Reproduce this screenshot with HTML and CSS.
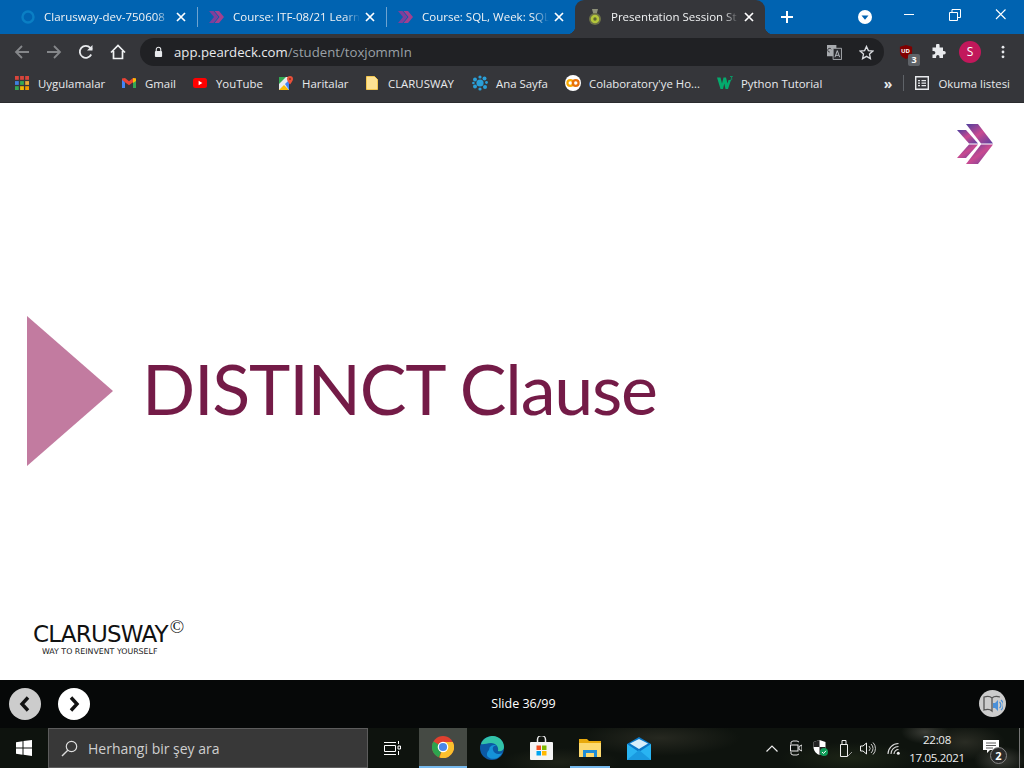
FILE: index.html
```html
<!DOCTYPE html>
<html>
  <head>
    <meta charset="utf-8">
    <title>Presentation Session Student</title>
    <link rel="stylesheet" href="styles.css">
  </head>
  <body>
    <!-- sekmeler -->
    <div class="tabstrip">
      <div class="tab">
        <svg class="fav" viewBox="0 0 16 16"><circle cx="8" cy="8" r="5.500" fill="none" stroke="#0a7fc4" stroke-width="2.400"/></svg>
        <span class="tab-title">Clarusway-dev-750608</span>
        <span class="tab-x"><svg width="10" height="10" viewBox="0 0 10 10"><path d="M1 1l8 8M9 1L1 9" stroke="#fff" stroke-width="1.700"/></svg></span>
      </div>
      <div class="tab sep">
        <svg class="fav" viewBox="0 0 16 16"><path d="M0 2h4.500l5 6-5 6H0l5-6z" fill="#7d3f9c"/><path d="M5.500 2H10l5 6-5 6H5.500l5-6z" fill="#a2408f"/></svg>
        <span class="tab-title">Course: ITF-08/21 Learn</span>
        <span class="tab-x"><svg width="10" height="10" viewBox="0 0 10 10"><path d="M1 1l8 8M9 1L1 9" stroke="#fff" stroke-width="1.700"/></svg></span>
      </div>
      <div class="tab sep">
        <svg class="fav" viewBox="0 0 16 16"><path d="M0 2h4.500l5 6-5 6H0l5-6z" fill="#7d3f9c"/><path d="M5.500 2H10l5 6-5 6H5.500l5-6z" fill="#a2408f"/></svg>
        <span class="tab-title">Course: SQL, Week: SQL</span>
        <span class="tab-x"><svg width="10" height="10" viewBox="0 0 10 10"><path d="M1 1l8 8M9 1L1 9" stroke="#fff" stroke-width="1.700"/></svg></span>
      </div>
      <div class="tab active">
        <svg class="fav" viewBox="0 0 16 16"><path d="M5 0h6l-1.200 4.500H6.200z" fill="#8d9078"/><circle cx="8" cy="10" r="6" fill="#6c7148"/><circle cx="8" cy="10" r="4.300" fill="#b4c63a"/><circle cx="8" cy="10" r="1.700" fill="#5d6630"/></svg>
        <span class="tab-title">Presentation Session St</span>
        <span class="tab-x"><svg width="10" height="10" viewBox="0 0 10 10"><path d="M1 1l8 8M9 1L1 9" stroke="#fff" stroke-width="1.700"/></svg></span>
      </div>
      <svg class="newtab" viewBox="0 0 12 12"><path d="M6 0v12M0 6h12" stroke="#fff" stroke-width="2"/></svg>
      <div class="grow"></div>
      <svg class="profile-drop" viewBox="0 0 14 14"><circle cx="7" cy="7" r="7" fill="#fff"/><path d="M3.500 5.500h7L7 9.800z" fill="#0063b1"/></svg>
      <div class="winbtn"><svg width="12" height="12" viewBox="0 0 12 12"><path d="M1 5.500h10" stroke="#fff"/></svg></div>
      <div class="winbtn"><svg width="12" height="12" viewBox="0 0 12 12"><path d="M.5 3.500h8v8h-8zM3 3.500V.5h8.500v8H8.500" fill="none" stroke="#fff"/></svg></div>
      <div class="winbtn"><svg width="12" height="12" viewBox="0 0 12 12"><path d="M1 .5l9.500 9.500M10.500 .5L1 10" stroke="#fff" stroke-width="1.100"/></svg></div>
    </div>

    <!-- adres cubugu -->
    <div class="toolbar">
      <svg class="tool" viewBox="0 0 16 16"><path d="M15 8H2M8 2L2 8l6 6" fill="none" stroke="#85878a" stroke-width="1.800"/></svg>
      <svg class="tool" viewBox="0 0 16 16"><path d="M1 8h13M8 2l6 6-6 6" fill="none" stroke="#85878a" stroke-width="1.800"/></svg>
      <svg class="tool" viewBox="0 0 16 16"><path d="M13.200 10.500A6 6 0 1 1 12.300 3.800L14 5.500" fill="none" stroke="#e8eaed" stroke-width="1.800"/><path d="M14.500 1v5.500H9z" fill="#e8eaed"/></svg>
      <svg class="tool" viewBox="0 0 16 16"><path d="M1 8.500L8 1.500l7 7M3.500 7v7.500h9V7" fill="none" stroke="#f1f3f4" stroke-width="1.700"/></svg>
      <div class="omnibox">
        <svg class="lock" viewBox="0 0 10 12"><path d="M2.500 5V3.200a2.500 2.500 0 0 1 5 0V5" fill="none" stroke="#e8eaed" stroke-width="1.200"/><rect x="1" y="5" width="8" height="6.500" rx="1" fill="#e8eaed"/></svg>
        <span class="url">app.peardeck.com<span class="url-path">/student/toxjommIn</span></span>
        <div class="grow"></div>
        <svg class="translate" viewBox="0 0 16 16"><rect x="0" y="0" width="10" height="12" fill="#a8abaf"/><path d="M6.500 3.500h9v12h-9z" fill="#2b2c30" stroke="#a8abaf"/><path d="M3 7.500a2 2 0 1 1 1.500-3" fill="none" stroke="#35363a"/><path d="M8.500 13l2.500-7 2.500 7M9.500 11h3" fill="none" stroke="#bdc1c6"/></svg>
        <svg class="star" viewBox="0 0 16 16"><path d="M8 1.500l2 4.500 4.800.5-3.600 3.200 1 4.800L8 12.100l-4.200 2.400 1-4.800L1.200 6.500 6 6z" fill="none" stroke="#dadce0" stroke-width="1.400"/></svg>
      </div>
      <div class="ublock">
        <svg viewBox="0 0 16 16" width="14" height="14"><path d="M8 0l7 2v6c0 4-3.500 6.500-7 8-3.500-1.500-7-4-7-8V2z" fill="#800000"/></svg>
        <span class="ublock-ud">UD</span>
        <span class="ublock-count">3</span>
      </div>
      <svg class="puzzle" viewBox="0 0 16 16"><path d="M6 1.500a1.800 1.800 0 0 1 3.600 0V3.500H13v3.400h1a1.800 1.800 0 0 1 0 3.600h-1V14H9.500v-1.300a1.700 1.700 0 0 0-3.400 0V14H2.500v-3.500h1.200a1.700 1.700 0 0 0 0-3.400H2.500V3.500H6z" fill="#e8eaed"/></svg>
      <div class="avatar">S</div>
      <svg class="menu-dots" viewBox="0 0 4 16"><circle cx="2" cy="2.500" r="1.600" fill="#e8eaed"/><circle cx="2" cy="8" r="1.600" fill="#e8eaed"/><circle cx="2" cy="13.500" r="1.600" fill="#e8eaed"/></svg>
    </div>

    <!-- yer imleri -->
    <div class="bookmarks">
      <div class="bm w-apps">
        <svg class="bm-ic" viewBox="0 0 14 14"><rect x="0" y="0" width="3.800" height="3.800" fill="#d9453c"/><rect x="5.100" y="0" width="3.800" height="3.800" fill="#d9453c"/><rect x="10.200" y="0" width="3.800" height="3.800" fill="#d9453c"/><rect x="0" y="5.100" width="3.800" height="3.800" fill="#3f7fe0"/><rect x="5.100" y="5.100" width="3.800" height="3.800" fill="#34a853"/><rect x="10.200" y="5.100" width="3.800" height="3.800" fill="#e9a83a"/><rect x="0" y="10.200" width="3.800" height="3.800" fill="#34a853"/><rect x="5.100" y="10.200" width="3.800" height="3.800" fill="#f2b705"/><rect x="10.200" y="10.200" width="3.800" height="3.800" fill="#f29900"/></svg>
        Uygulamalar
      </div>
      <div class="bm w-gmail">
        <svg class="bm-ic" viewBox="0 0 14 14"><path d="M0 2.500v9.500h3V6.500z" fill="#4285f4"/><path d="M14 2.500v9.500h-3V6.500z" fill="#34a853"/><path d="M0 2.500L3 2l4 3.300L11 2l3 .5v1.500L7 9.200 0 4z" fill="#ea4335"/><path d="M11 2l3 .5V5l-3 2z" fill="#fbbc05"/></svg>
        Gmail
      </div>
      <div class="bm w-yt">
        <svg class="bm-ic" viewBox="0 0 14 14"><rect x="0" y="2" width="14" height="10" rx="2.500" fill="#f00"/><path d="M5.600 4.800L9.400 7l-3.800 2.200z" fill="#fff"/></svg>
        YouTube
      </div>
      <div class="bm w-maps">
        <svg class="bm-ic" viewBox="0 0 14 14"><path d="M0 1h10v13H0z" fill="#e8eaed"/><path d="M0 1h7L0 8z" fill="#34a853"/><path d="M0 14l5-5 5 5z" fill="#fbbc05"/><path d="M6 8l4-4v10z" fill="#4285f4"/><path d="M11 0a3 3 0 0 1 3 3c0 2-3 5.500-3 5.500S8 5 8 3a3 3 0 0 1 3-3z" fill="#e8503a"/><circle cx="11" cy="3" r="1" fill="#8f2b1d"/></svg>
        Haritalar
      </div>
      <div class="bm w-folder">
        <svg class="bm-ic folder-ic" viewBox="0 0 12 14"><path d="M.5.500h8l3 3v10H.5z" fill="#fde293" stroke="#f3c64f"/></svg>
        CLARUSWAY
      </div>
      <div class="bm w-ana">
        <svg class="bm-ic wide-ic" viewBox="0 0 16 16"><g fill="#2a9fd8"><circle cx="8" cy="8" r="3.600"/><circle cx="3" cy="4.500" r="2"/><circle cx="12.500" cy="3.500" r="2"/><circle cx="3" cy="11.500" r="2"/><circle cx="13" cy="12" r="2"/><circle cx="8" cy="2" r="1.600"/><circle cx="8" cy="14" r="1.600"/><circle cx="14.500" cy="7.500" r="1.400"/><circle cx="1.400" cy="8" r="1.300"/></g></svg>
        Ana Sayfa
      </div>
      <div class="bm w-colab">
        <svg class="bm-ic wide-ic" viewBox="0 0 16 16"><circle cx="8" cy="8" r="8" fill="#fff"/><circle cx="5.300" cy="8" r="2.900" fill="none" stroke="#f9ab00" stroke-width="2.200"/><circle cx="10.700" cy="8" r="2.900" fill="none" stroke="#e8710a" stroke-width="2.200"/></svg>
        Colaboratory'ye Ho...
      </div>
      <div class="bm">
        <svg class="bm-ic wide-ic" viewBox="0 0 16 14"><path d="M0 1.500h3.500l1.500 6 1.500-6h2.500l1.500 6 1-3.500h2.500L11 13H8.500L7.300 7.500 6 13H3.500z" fill="#04aa6d"/><path d="M13 .5h2.500L14 2.200c1.400 0 1.400 2-.8 1.800" fill="none" stroke="#04aa6d" stroke-width=".8"/></svg>
        Python Tutorial
      </div>
      <div class="grow"></div>
      <span class="bm-more">»</span>
      <div class="bm-sep"></div>
      <div class="bm">
        <svg class="bm-ic" viewBox="0 0 14 14"><path d="M.7.700h12.600v12.600H.7z" fill="none" stroke="#e8eaed" stroke-width="1.400"/><path d="M3 4h2v1.300H3zM6.500 4h4.500v1.300H6.500zM3 6.500h2v1.300H3zM6.500 6.500h4.500v1.300H6.500zM3 9h2v1.300H3zM6.500 9h4.500v1.300H6.500z" fill="#e8eaed"/></svg>
        Okuma listesi
      </div>
    </div>

    <!-- slayt -->
    <div class="slide">
      <svg class="slide-logo" viewBox="0 0 36 40">
        <defs><linearGradient id="lg" x1="0" y1="0" x2="1" y2="1"><stop offset="0" stop-color="#4f3f9e"/><stop offset=".5" stop-color="#c94a90"/><stop offset="1" stop-color="#5a3fa0"/></linearGradient></defs>
        <path d="M0 6h9l12 13.500H12z" fill="url(#lg)"/><path d="M0 34h9l12-13.500H12z" fill="url(#lg)"/>
        <path d="M9 0h12l15 19.500H24z" fill="url(#lg)"/><path d="M9 40h12l15-19.500H24z" fill="url(#lg)"/>
      </svg>
      <div class="slide-main">
        <div class="triangle"></div>
        <h1 class="slide-title">DISTINCT Clause</h1>
      </div>
      <div class="brand">
        <div class="brand-name">CLARUSWAY<sup>©</sup></div>
        <div class="brand-tag">WAY TO REINVENT YOURSELF</div>
      </div>
    </div>

    <!-- slayt gecisi -->
    <div class="slidenav">
      <div class="round gray"><svg width="12" height="16" viewBox="0 0 12 16"><path d="M9 1.500L3 8l6 6.500" fill="none" stroke="#111" stroke-width="3.400"/></svg></div>
      <div class="round white"><svg width="12" height="16" viewBox="0 0 12 16"><path d="M3 1.500L9 8l-6 6.500" fill="none" stroke="#111" stroke-width="3.400"/></svg></div>
      <div class="slide-count">Slide 36/99</div>
      <div class="audio">
        <svg width="20" height="20" viewBox="0 0 20 20"><path d="M1 3c3-1 6-1 8 1v13c-2-2-5-2-8-1zM17 3c-3-1-6-1-8 1" fill="none" stroke="#555" stroke-width="1.300"/><path d="M10 9h2l3-3v11l-3-3h-2z" fill="#4a90d9"/><path d="M16.500 8a4 4 0 0 1 0 6M18 6a6.500 6.500 0 0 1 0 10" fill="none" stroke="#4a90d9" stroke-width="1.200"/></svg>
      </div>
    </div>

    <!-- gorev cubugu -->
    <div class="taskbar">
      <div class="start">
        <svg width="16" height="16" viewBox="0 0 16 16"><path d="M0 2.300l6.500-1v6.300H0zM7.500 1.100L16 0v7.600H7.500zM0 8.500h6.500v6.300l-6.500-1zM7.500 8.500H16V16l-8.500-1.200z" fill="#fff"/></svg>
      </div>
      <div class="search">
        <svg width="17" height="17" viewBox="0 0 17 17"><circle cx="10.500" cy="6.500" r="5.200" fill="none" stroke="#ddd" stroke-width="1.200"/><path d="M6.800 10.300L1 16" stroke="#ddd" stroke-width="1.400"/></svg>
        <span>Herhangi bir şey ara</span>
      </div>
      <div class="task taskview"><svg width="17" height="15" viewBox="0 0 17 15"><path d="M.5 4.500h11v6H.5zM0 1.500h12M0 13.500h12" fill="none" stroke="#fff"/><path d="M14.500 0v3M14 5h2.500v3H14zM14.500 10v4" stroke="#fff" fill="none"/></svg></div>
      <div class="task current">
        <svg width="22" height="22" viewBox="0 0 22 22"><circle cx="11" cy="11" r="11" fill="#e0402f"/><path d="M11 11L1.400 5.500A11 11 0 0 0 7 21.300z" fill="#2da44e"/><path d="M11 6h9.800A11 11 0 0 1 7.500 21.500L11 11z" fill="#fbc02d"/><circle cx="11" cy="11" r="5.300" fill="#fff"/><circle cx="11" cy="11" r="4.100" fill="#4a87e8"/></svg>
      </div>
      <div class="task">
        <svg width="24" height="24" viewBox="0 0 24 24"><circle cx="12" cy="12" r="12" fill="#0c59a4"/><path d="M1 8C3 2 9 0 13 0c6 0 11 5 11 11 0 3-3 5-6 4 1-4-2-8-7-8-4 0-8 2-10 1z" fill="#32c3a8"/><path d="M9 14a5 5 0 0 1 8-4c-3-1-5 1-4 4 1 4 6 5 9 3-2 5-9 8-14 4-2-2-1-5 1-7z" fill="#1592d8"/></svg>
      </div>
      <div class="task">
        <svg width="23" height="24" viewBox="0 0 23 24"><path d="M7.500 6V3.500a4 4 0 0 1 8 0V6" fill="none" stroke="#e8e8e8" stroke-width="1.500"/><rect x="0" y="6" width="23" height="18" rx="1" fill="#f4f4f4"/><rect x="6.500" y="9.500" width="4.500" height="4.500" fill="#f25022"/><rect x="12" y="9.500" width="4.500" height="4.500" fill="#7fba00"/><rect x="6.500" y="15" width="4.500" height="4.500" fill="#00a4ef"/><rect x="12" y="15" width="4.500" height="4.500" fill="#ffb900"/></svg>
      </div>
      <div class="task open">
        <svg width="22" height="18" viewBox="0 0 22 18"><path d="M0 0h8l2 2h12v16H0z" fill="#e8a90c"/><path d="M0 4h22v14H0z" fill="#fcd96f"/><path d="M4 11h14v7h-3v-4H7v4H4z" fill="#1f8dd6"/></svg>
      </div>
      <div class="task">
        <svg width="24" height="23" viewBox="0 0 24 23"><path d="M0 7L12 0l12 7v16H0z" fill="#0a78c8"/><path d="M0 7l12 8 12-8v16H0z" fill="#29b4f2"/><path d="M0 23l12-10 12 10z" fill="#1a9ae0"/><path d="M3 6.500L12 2l9 4.500L12 12z" fill="#d8eefb"/></svg>
      </div>
      <div class="grow"></div>
      <div class="tray">
        <svg class="tray-up" width="12" height="7" viewBox="0 0 12 7"><path d="M.5 6.500L6 1l5.500 5.500" fill="none" stroke="#eee" stroke-width="1.200"/></svg>
        <svg class="tray-cam" width="12" height="16" viewBox="0 0 12 16"><path d="M1 4V2l2-1h4l2 1M1 12v2l2 1h4l2-1" fill="none" stroke="#ddd"/><rect x=".5" y="5" width="7.500" height="6" fill="none" stroke="#eee"/><path d="M9 6.500l3-1.500v6l-3-1.500z" fill="none" stroke="#eee"/></svg>
        <svg class="tray-shield" width="15" height="16" viewBox="0 0 15 16"><path d="M6.500 0l6 2v5c0 4-3 7-6 8-3-1-6-4-6-8V2z" fill="#fff"/><path d="M6.500 0v7H.5V2zM6.500 7h6c0 3-1 5-2 6l-4 2z" fill="#222"/><circle cx="11" cy="12" r="4" fill="#0f9d58"/><path d="M9 12l1.500 1.500L13 10.800" fill="none" stroke="#fff"/></svg>
        <svg class="tray-usb" width="14" height="17" viewBox="0 0 14 17"><path d="M1.500 4.500h7v12h-7zM3 .5h4v4H3z" fill="none" stroke="#eee"/><path d="M9 16l4-4" stroke="#999"/></svg>
        <svg class="tray-vol" width="16" height="13" viewBox="0 0 16 13"><path d="M.5 4h2.500L6.500 1v11L3 9H.5z" fill="none" stroke="#eee"/><path d="M9 4a3.500 3.500 0 0 1 0 5M11 2a6 6 0 0 1 0 9M13 .5a8.500 8.500 0 0 1 0 12" fill="none" stroke="#ccc"/></svg>
        <svg class="tray-wifi" width="13" height="13" viewBox="0 0 13 13"><path d="M7 12a4.500 4.500 0 0 1 4.500-4.500M4 12a7.500 7.500 0 0 1 7.500-7.500M1 12A10.500 10.500 0 0 1 11.500 1.500" fill="none" stroke="#ddd" stroke-width="1.100"/><circle cx="11.300" cy="11.300" r="1.500" fill="#eee"/></svg>
        <div class="clock"><span>22:08</span><span>17.05.2021</span></div>
        <div class="notif">
          <svg width="16" height="13" viewBox="0 0 16 13"><path d="M0 0h16v10H7l-3 3v-3H0z" fill="#fff"/><path d="M3 3h10M3 5.500h10M3 8h7" stroke="#333" stroke-width=".8"/></svg>
          <span class="notif-count">2</span>
        </div>
      </div>
    </div>
  </body>
</html>
```

FILE: styles.css
```css
html, body {
  margin: 0;
  padding: 0;
}

body {
  width: 1024px;
  height: 768px;
  overflow: hidden;
  display: flex;
  flex-direction: column;
  background: #fff;
  font-family: "Open Sans", "Noto Sans", sans-serif;
  color: #fff;
}

svg {
  display: block;
  flex: none;
}

.grow {
  flex: 1;
}

/* tab strip */
.tabstrip {
  height: 34px;
  flex: none;
  display: flex;
  align-items: stretch;
  padding-left: 8px;
  background: #0063b1;
}

.tab {
  width: 189px;
  box-sizing: border-box;
  display: flex;
  align-items: center;
  padding: 0 6px 0 12px;
  font-size: 11.500px;
  color: #f1f3f4;
}

.tab.sep {
  background: linear-gradient(#6ea3d0, #6ea3d0) left 7px / 1px 20px no-repeat;
}

.tab.active {
  width: 190px;
  background: #35363a;
  border-radius: 9px 9px 0 0;
  position: relative;
}

/* little curves at the foot of the active tab */
.tab.active::before,
.tab.active::after {
  content: "";
  position: absolute;
  bottom: 0;
  width: 8px;
  height: 8px;
}

.tab.active::before {
  left: -8px;
  background: radial-gradient(circle at 0 0, transparent 8px, #35363a 8.500px);
}

.tab.active::after {
  right: -8px;
  background: radial-gradient(circle at 100% 0, transparent 8px, #35363a 8.500px);
}

.fav {
  width: 16px;
  height: 16px;
  margin-right: 8px;
}

.tab-title {
  flex: 1;
  min-width: 0;
  padding-bottom: 1px;
  overflow: hidden;
  white-space: nowrap;
  -webkit-mask-image: linear-gradient(to right, #000 88%, transparent);
  mask-image: linear-gradient(to right, #000 88%, transparent);
}

.tab-x {
  width: 20px;
  display: flex;
  justify-content: center;
}

.newtab {
  width: 12px;
  height: 12px;
  margin: 11px 0 0 16px;
}

.profile-drop {
  width: 14px;
  height: 14px;
  margin: 10px 14px 0 0;
}

.winbtn {
  width: 46px;
  display: flex;
  justify-content: center;
  padding-top: 9px;
}

/* toolbar */
.toolbar {
  height: 36px;
  flex: none;
  display: flex;
  align-items: center;
  padding-left: 14px;
  background: #35363a;
}

.tool {
  width: 16px;
  height: 16px;
  margin-right: 16px;
}

.omnibox {
  width: 744px;
  height: 28px;
  margin-left: -2px;
  display: flex;
  align-items: center;
  box-sizing: border-box;
  padding: 0 10px 0 14px;
  border-radius: 14px;
  background: #202124;
}

.lock {
  width: 9px;
  height: 12px;
  margin-right: 11px;
}

.url {
  font-size: 13.200px;
  color: #e8eaed;
  white-space: nowrap;
}

.url-path {
  color: #9aa0a6;
}

.translate {
  width: 15px;
  height: 15px;
  margin-right: 17px;
}

.star {
  width: 15px;
  height: 15px;
}

.ublock {
  width: 18px;
  height: 22px;
  margin-left: 14px;
  box-sizing: border-box;
  padding: 4px 0 0 1px;
  position: relative;
}

.ublock-ud {
  position: absolute;
  left: 3px;
  top: 6px;
  font-size: 6px;
  font-weight: 700;
}

.ublock-count {
  position: absolute;
  left: 10px;
  top: 13px;
  width: 12px;
  height: 12px;
  background: #5f6368;
  border-radius: 2px;
  font-size: 9px;
  font-weight: 700;
  line-height: 12px;
  text-align: center;
}

.puzzle {
  width: 16px;
  height: 16px;
  margin-left: 14px;
}

.avatar {
  width: 22px;
  height: 22px;
  margin-left: 13px;
  border-radius: 50%;
  background: #c2185b;
  font-size: 12px;
  line-height: 22px;
  text-align: center;
}

.menu-dots {
  width: 4px;
  height: 14px;
  margin-left: 20px;
}

/* bookmarks */
.bookmarks {
  height: 33px;
  flex: none;
  box-sizing: border-box;
  display: flex;
  align-items: center;
  padding: 0 14px 6px 15px;
  background: #35363a;
  border-bottom: 1px solid #2a2b2e;
  font-size: 11.400px;
  color: #e8eaed;
}

.bm {
  display: flex;
  align-items: center;
  white-space: nowrap;
}

.bm-ic {
  width: 14px;
  height: 14px;
  margin-right: 9px;
}

.folder-ic {
  width: 12px;
  margin-right: 10px;
}

.wide-ic {
  width: 16px;
  height: 16px;
  margin-right: 8px;
}

.w-apps { width: 107px; }
.w-gmail { width: 71px; }
.w-yt { width: 86px; }
.w-maps { width: 87px; }
.w-folder { width: 106px; }
.w-ana { width: 93px; }
.w-colab { width: 152px; }

.bm-more {
  font-size: 14px;
  font-weight: 700;
}

.bm-sep {
  width: 1px;
  height: 16px;
  margin: 0 11px;
  background: #5f6368;
}

/* slide */
.slide {
  flex: 1;
  display: flex;
  flex-direction: column;
  background: #fff;
  min-height: 0;
}

.slide-logo {
  width: 36px;
  height: 40px;
  align-self: flex-end;
  margin: 21px 31px 0 0;
}

.slide-main {
  display: flex;
  align-items: center;
  margin: 152px 0 0 27px;
}

.triangle {
  width: 0;
  height: 0;
  border-left: 86px solid #c27ba0;
  border-top: 75px solid transparent;
  border-bottom: 75px solid transparent;
}

.slide-title {
  margin: 0 0 0 29px;
  padding-bottom: 7px;
  font-family: "Lato", "Open Sans", sans-serif;
  font-size: 70px;
  font-weight: 400;
  line-height: 1;
  letter-spacing: -1.250px;
  color: #741b47;
  white-space: nowrap;
}

.brand {
  margin: 157px 0 0 33px;
  color: #111;
}

.brand-name {
  font-family: "DejaVu Sans", sans-serif;
  font-size: 23px;
  line-height: 22px;
  letter-spacing: -.8px;
}

.brand-name sup {
  margin-left: 2px;
  font-family: "Liberation Serif", serif;
  font-size: 19px;
  line-height: 0;
}

.brand-tag {
  margin: 2px 0 0 9px;
  font-family: "DejaVu Sans", sans-serif;
  font-size: 7.850px;
  line-height: 9px;
  color: #222;
}

/* slide controls */
.slidenav {
  height: 48px;
  flex: none;
  box-sizing: border-box;
  display: flex;
  align-items: center;
  padding: 0 18px 1px 9px;
  background: #060808;
}

.round {
  width: 32px;
  height: 32px;
  border-radius: 50%;
  margin-right: 17px;
  display: flex;
  align-items: center;
  justify-content: center;
}

.round.gray { background: #ccc; }
.round.white { background: #fff; }

.slide-count {
  flex: 1;
  font-size: 12.500px;
  text-align: center;
  padding-right: 39px;
}

.audio {
  width: 27px;
  height: 27px;
  border-radius: 50%;
  background: #ccc;
  display: flex;
  align-items: center;
  justify-content: center;
}

/* windows taskbar */
.taskbar {
  height: 40px;
  flex: none;
  display: flex;
  align-items: stretch;
  background:
    radial-gradient(ellipse 26px 14px at 1000px 32px, #3c3e38, transparent),
    radial-gradient(ellipse 24px 12px at 925px 4px, #3a3c36, transparent),
    radial-gradient(ellipse 40px 18px at 965px 14px, #2a2c24, transparent),
    radial-gradient(ellipse 80px 18px at 660px 10px, #262820, transparent),
    radial-gradient(ellipse 60px 14px at 560px 34px, #1e2218, transparent),
    radial-gradient(ellipse 70px 16px at 850px 30px, #1c2416, transparent),
    #0e130e;
}

.start {
  width: 48px;
  display: flex;
  align-items: center;
  justify-content: center;
}

.search {
  width: 320px;
  box-sizing: border-box;
  display: flex;
  align-items: center;
  gap: 10px;
  padding-left: 12px;
  background: #383838;
  border: 1px solid #5c5c5c;
  font-size: 14px;
  color: #cfcfcf;
}

.task {
  width: 48px;
  margin-left: 1px;
  box-sizing: border-box;
  display: flex;
  align-items: center;
  justify-content: center;
}

.task.taskview {
  width: 50px;
  margin-left: 0;
  padding-right: 2px;
}

.task.current {
  background: #454a44;
  border-bottom: 2px solid #76b9ed;
}

.task.open {
  background: linear-gradient(#76b9ed, #76b9ed) bottom center / 40px 2px no-repeat;
}

.tray {
  display: flex;
  align-items: center;
}

.tray-up { margin-right: 12px; }
.tray-cam { margin-right: 11px; }
.tray-shield { margin-right: 11px; }
.tray-usb { margin-right: 7px; }
.tray-vol { margin-right: 11px; }
.tray-wifi { margin-right: 4px; }

.clock {
  width: 66px;
  display: flex;
  flex-direction: column;
  align-items: center;
  gap: 3px;
  font-size: 11.500px;
  letter-spacing: -.3px;
  line-height: 15px;
  color: #eee;
}

.notif {
  width: 50px;
  height: 100%;
  margin-right: 4px;
  box-sizing: border-box;
  border-right: 1px solid #777;
  position: relative;
  padding: 12px 0 0 13px;
}

.notif-count {
  position: absolute;
  left: 20px;
  top: 19px;
  width: 15px;
  height: 15px;
  border: 1px solid #888;
  border-radius: 50%;
  background: #2a2a2a;
  font-size: 11px;
  font-weight: 700;
  line-height: 15px;
  text-align: center;
}
```
